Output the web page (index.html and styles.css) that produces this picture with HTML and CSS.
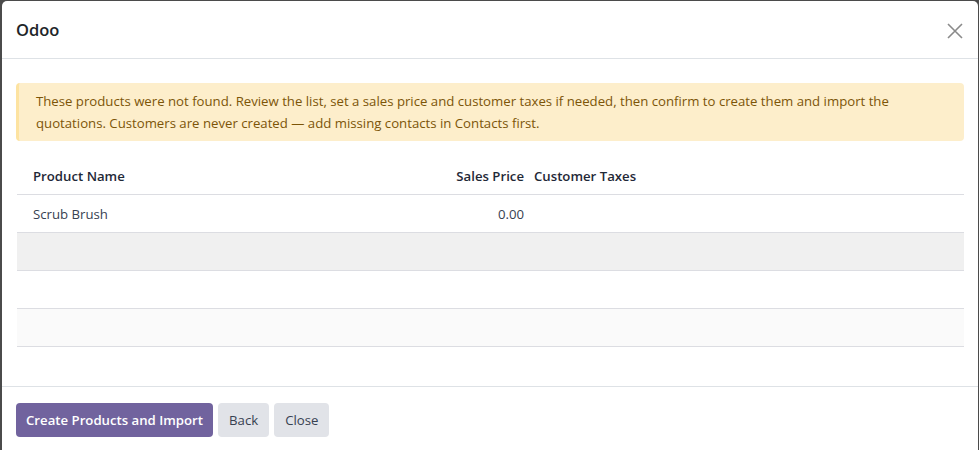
FILE: index.html
```html
<!DOCTYPE html>
<html lang="en">

<head>
    <meta charset="utf-8" />
    <title>Odoo</title>
    <link rel="stylesheet" href="styles.css">
</head>

<body>
    <div class="modal">
        <header class="modal-header">
            <h4 class="modal-title">Odoo</h4>
            <button class="btn-close" aria-label="Close">
                <svg width="16" height="16" viewBox="0 0 16 16">
                    <path d="M1 1 L15 15 M15 1 L1 15" stroke="#8a8a8a" stroke-width="1.6" fill="none" />
                </svg>
            </button>
        </header>

        <main class="modal-body">
            <div class="alert-warning">
                These products were not found. Review the list, set a sales price and customer taxes if needed, then
                confirm to create them and import the quotations. Customers are never created — add missing contacts
                in Contacts first.
            </div>

            <table class="list">
                <colgroup>
                    <col class="col-name">
                    <col class="col-price">
                    <col>
                </colgroup>
                <thead>
                    <tr>
                        <th class="first">Product Name</th>
                        <th class="num">Sales Price</th>
                        <th>Customer Taxes</th>
                    </tr>
                </thead>
                <tbody>
                    <tr>
                        <td class="first">Scrub Brush</td>
                        <td class="num">0.00</td>
                        <td></td>
                    </tr>
                    <tr class="hover">
                        <td></td>
                        <td></td>
                        <td></td>
                    </tr>
                    <tr>
                        <td></td>
                        <td></td>
                        <td></td>
                    </tr>
                    <tr class="stripe">
                        <td></td>
                        <td></td>
                        <td></td>
                    </tr>
                </tbody>
            </table>
        </main>

        <footer class="modal-footer">
            <button class="btn btn-primary">Create Products and Import</button>
            <button class="btn btn-secondary">Back</button>
            <button class="btn btn-secondary">Close</button>
        </footer>
    </div>
</body>

</html>
```

FILE: styles.css
```css
body {
    margin: 0;
    background: #4b4b4b;
    font-family: "Open Sans", "Noto Sans", sans-serif;
    font-size: 13.2px;
    color: #374151;
    overflow: hidden;
}

.modal {
    margin: 1px 0 0 2px;
    width: 976px;
    height: 470px;
    background: #fff;
    border-radius: 5px 5px 0 0;
}

.modal-header {
    height: 57px;
    display: flex;
    align-items: center;
    justify-content: space-between;
    padding: 0 15px 0 14px;
    border-bottom: 1px solid #dee2e6;
}

.modal-title {
    margin: 0;
    font-size: 16.5px;
    font-weight: 600;
    color: #212529;
}

.btn-close {
    background: none;
    border: 0;
    padding: 0;
    width: 16px;
    height: 16px;
    margin-top: 2px;
}

.modal-body {
    padding: 24px 14px 0 14px;
    height: 303px;
    border-bottom: 1px solid #dee2e6;
}

.alert-warning {
    background: #fdeecb;
    border-left: 3px solid #fde3a1;
    border-radius: 4px;
    color: #7c5508;
    padding: 7px 16px 7px 17px;
    line-height: 22px;
}

.list {
    margin: 20px 0 0 1px;
    width: calc(100% - 1px);
    border-collapse: collapse;
    table-layout: fixed;
}

.col-name {
    width: 427px;
}

.col-price {
    width: 85px;
}

.list th {
    height: 29px;
    padding: 0 5px 4px;
    text-align: left;
    font-weight: 600;
    color: #1f2937;
    border-bottom: 1px solid #dcdde2;
}

.list td {
    height: 37px;
    padding: 0 5px;
    border-bottom: 1px solid #dcdde2;
}

.list .first {
    padding-left: 16px;
}

.list .num {
    text-align: right;
}

.list tr.hover td {
    background: #f0f0f0;
}

.list tr.stripe td {
    background: #fafafa;
}

.modal-footer {
    display: flex;
    gap: 5px;
    padding: 16px 14px;
}

.btn {
    font-family: inherit;
    font-size: 13.2px;
    height: 34px;
    padding: 0 10px;
    border: 0;
    border-radius: 4px;
}

.btn-primary {
    background: #71639e;
    color: #fff;
    font-weight: 600;
}

.btn-secondary {
    background: #e1e3e8;
    color: #374151;
    padding: 0 11px;
}
```
